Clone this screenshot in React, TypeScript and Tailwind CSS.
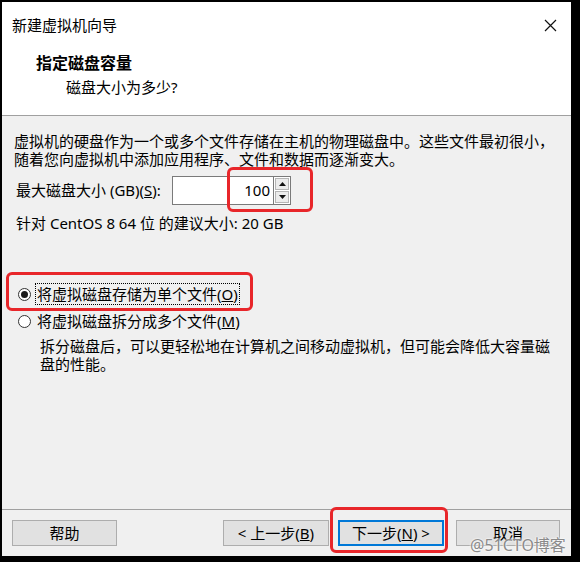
import React from 'react';

const font = { fontFamily: '"Noto Sans", "Noto Sans CJK SC", sans-serif' };

function Radio({ checked }: { checked?: boolean }) {
  return (
    <span className="flex h-[13px] w-[13px] shrink-0 items-center justify-center rounded-full border border-[#333] bg-white">
      {checked && <span className="h-[7px] w-[7px] rounded-full bg-[#1a1a1a]" />}
    </span>
  );
}

function Btn({ children, primary, w = 'w-[106px]' }: { children: React.ReactNode; primary?: boolean; w?: string }) {
  return (
    <button
      className={
        'flex h-[26px] items-center justify-center bg-[#e1e1e1] text-[15px] text-black ' +
        w +
        ' ' +
        (primary ? 'border-2 border-[#0078d7]' : 'border border-[#adadad]')
      }
    >
      {children}
    </button>
  );
}

export default function App() {
  return (
    <div className="relative h-[562px] w-[580px] overflow-hidden bg-black pl-[2px] pt-[2px]" style={font}>
      <div className="flex h-[554px] w-[569px] flex-col bg-[#f0f0f0] text-black">
        {/* header */}
        <div className="h-[114px] border-b border-[#a0a0a0] bg-white">
          <div className="flex h-[46px] items-center justify-between pl-[10px] pr-[14px]">
            <span className="text-[15px]">新建虚拟机向导</span>
            <svg width="13" height="13" viewBox="0 0 13 13">
              <path d="M1 1L12 12M12 1L1 12" stroke="#111" strokeWidth="1.2" />
            </svg>
          </div>
          <div className="mt-[5px] pl-[34px] text-[16px] font-bold leading-[20px]">指定磁盘容量</div>
          <div className="mt-[4px] pl-[64px] text-[15px] leading-[20px]">磁盘大小为多少?</div>
        </div>

        {/* body */}
        <div className="flex flex-1 flex-col px-[12px] pt-[16px] text-[15px]">
          <p className="leading-[18px]">
            虚拟机的硬盘作为一个或多个文件存储在主机的物理磁盘中。这些文件最初很小，
            <br />
            随着您向虚拟机中添加应用程序、文件和数据而逐渐变大。
          </p>
          <div className="mt-[8px] flex h-[29px] items-center">
            <span className="w-[158px] pl-[2px]">
              最大磁盘大小 (GB)(<span className="underline">S</span>):
            </span>
            <div className="flex h-[29px] w-[102px] items-center justify-end border border-[#7a7a7a] bg-white pr-[3px]">
              100
            </div>
            <div className="flex h-[29px] w-[17px] flex-col border-y border-r border-[#7a7a7a] bg-white p-[1px]">
              <span className="flex flex-1 items-center justify-center border border-[#b5b5b5] bg-[#ececec]">
                <svg width="7" height="4" viewBox="0 0 7 4"><path d="M3.5 0L7 4H0z" fill="#111" /></svg>
              </span>
              <span className="mt-[1px] flex flex-1 items-center justify-center border border-[#b5b5b5] bg-[#ececec]">
                <svg width="7" height="4" viewBox="0 0 7 4"><path d="M0 0H7L3.5 4z" fill="#111" /></svg>
              </span>
            </div>
          </div>
          <p className="mt-[9px] pl-[2px] leading-[18px]">针对 CentOS 8 64 位 的建议大小: 20 GB</p>

          <div className="mt-[51px] flex h-[22px] items-center gap-[4px] pl-[4px]">
            <Radio checked />
            <span className="border border-dotted border-black px-[1px] leading-[20px]">
              将虚拟磁盘存储为单个文件(<span className="underline">O</span>)
            </span>
          </div>
          <div className="mt-[5px] flex h-[22px] items-center gap-[4px] pl-[4px]">
            <Radio />
            <span className="px-[2px] leading-[20px]">
              将虚拟磁盘拆分成多个文件(<span className="underline">M</span>)
            </span>
          </div>
          <p className="mt-[5px] pl-[26px] leading-[18px]">
            拆分磁盘后，可以更轻松地在计算机之间移动虚拟机，但可能会降低大容量磁
            <br />
            盘的性能。
          </p>
        </div>

        {/* footer */}
        <div className="flex items-center border-t border-[#a0a0a0] pb-[10px] pl-[10px] pr-[11px] pt-[10px]">
          <Btn w="w-[105px]">帮助</Btn>
          <div className="ml-auto flex">
            <Btn>
              &lt; 上一步(<span className="underline">B</span>)
            </Btn>
            <div className="ml-[9px]">
              <Btn primary>
                下一步(<span className="underline">N</span>) &gt;
              </Btn>
            </div>
            <div className="ml-[12px]">
              <Btn w="w-[104px]">取消</Btn>
            </div>
          </div>
        </div>
      </div>

      {/* annotation boxes */}
      <div className="absolute left-[227px] top-[167px] h-[45px] w-[86px] rounded-[6px] border-[3px] border-[#e8262a]" />
      <div className="absolute left-[6px] top-[272px] h-[39px] w-[247px] rounded-[6px] border-[3px] border-[#e8262a]" />
      <div className="absolute left-[330px] top-[507px] h-[46px] w-[118px] rounded-[6px] border-[3px] border-[#e8262a]" />

      <div className="absolute left-[470px] top-[535px] text-[16px] leading-[20px] text-[#8a8a8a] [text-shadow:0_0_2px_#fff,0_0_2px_#fff]">
        @51CTO博客
      </div>
    </div>
  );
}
